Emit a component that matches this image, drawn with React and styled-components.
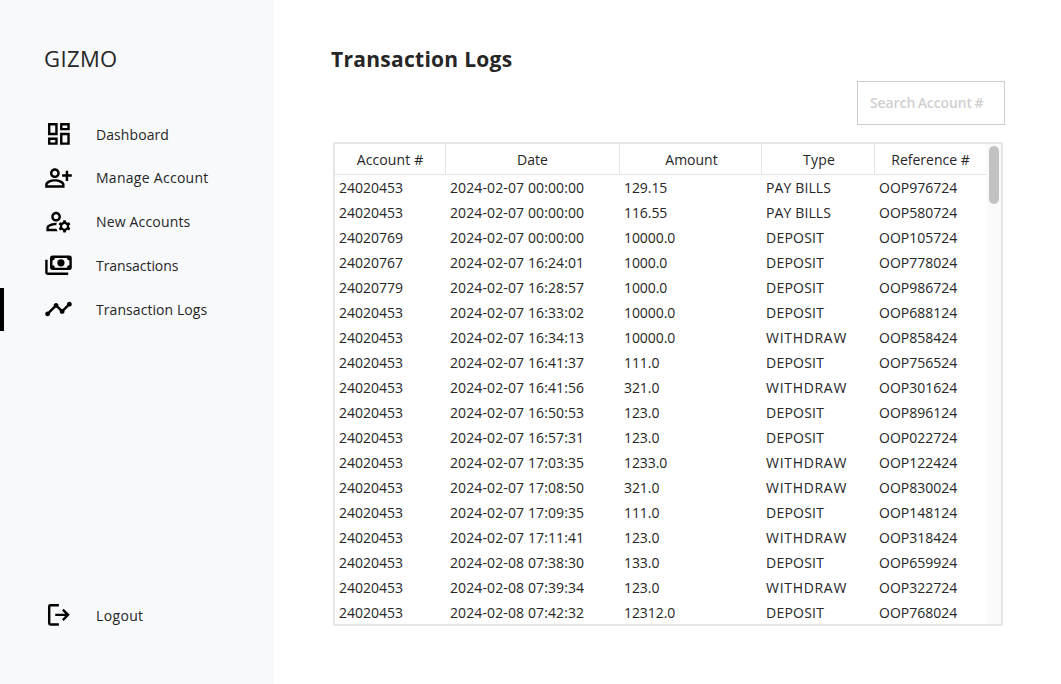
import React from 'react';
import styled, { createGlobalStyle } from 'styled-components';

const Global = createGlobalStyle`
  * { box-sizing: border-box; }
  body { margin: 0; background: #fff; overflow: hidden; }
  input, button { font: inherit; }
`;

const Page = styled.div`
  display: flex;
  width: 1061px;
  height: 684px;
  font-family: "Open Sans", "Noto Sans", sans-serif;
  font-size: 14px;
  color: #262626;
`;

const Sidebar = styled.aside`
  display: flex;
  flex-direction: column;
  width: 274px;
  padding: 42px 0 48px;
  background: #f8f9fb;
`;

const Brand = styled.div`
  height: 32px;
  padding-left: 44px;
  font-size: 22px;
  line-height: 32px;
  letter-spacing: 0.4px;
`;

const Nav = styled.nav`
  display: flex;
  flex-direction: column;
  gap: 1px;
  flex: 1;
  padding-top: 38px;
`;

const NavItem = styled.a`
  display: flex;
  align-items: center;
  gap: 23px;
  height: 43px;
  padding-left: 40px;
  border-left: 4px solid ${(p) => (p.$active ? '#000' : 'transparent')};
  letter-spacing: ${(p) => p.$track || 0}px;
  white-space: nowrap;
`;

const NavLabel = styled.span`
  padding-top: ${(p) => p.$drop || 0}px;
`;

const IconSvg = styled.svg`
  width: 29px;
  height: 29px;
  flex: none;
  fill: #000;
`;

const Main = styled.main`
  display: flex;
  flex-direction: column;
  flex: 1;
  padding: 43px 56px 0 59px;
`;

const Title = styled.h1`
  margin: 0 0 6px -2px;
  height: 32px;
  font-size: 21px;
  line-height: 32px;
  font-weight: 700;
  letter-spacing: 0.27px;
`;

const Search = styled.input`
  align-self: flex-end;
  width: 148px;
  height: 44px;
  padding: 0 12px 2px;
  border: 1px solid #cdcdcd;
  border-radius: 0;
  outline: none;
  background: #fff;
  font-weight: 600;
  letter-spacing: -0.1px;
  word-spacing: -1px;
  &::placeholder { color: #d0d0d0; opacity: 1; }
`;

const TableFrame = styled.section`
  display: flex;
  width: 670px;
  height: 484px;
  margin-top: 17px;
  border: 2px solid #e5e5e5;
  overflow: hidden;
`;

const Grid = styled.div`
  width: 651px;
`;

const Row = styled.div`
  display: grid;
  grid-template-columns: 111px 174px 142px 113px 111px;
  height: ${(p) => (p.$head ? 31 : 25)}px;
  border-bottom: ${(p) => (p.$head ? '1px solid #e5e5e5' : 'none')};
`;

const HeadCell = styled.div`
  padding-left: ${(p) => p.$shift || 0}px;
  border-right: 1px solid #e5e5e5;
  text-align: center;
  line-height: 31px;
  letter-spacing: ${(p) => p.$track || 0}px;
  &:last-child { border-right: 0; }
`;

const Cell = styled.div`
  padding-left: 4px;
  line-height: 25px;
  white-space: nowrap;
  letter-spacing: ${(p) => p.$track || 0}px;
`;

const ScrollTrack = styled.div`
  width: 15px;
  padding: 2px 2px 0 3px;
  background: #fafafa;
`;

const ScrollThumb = styled.div`
  height: 58px;
  border-radius: 5px;
  background: #c2c2c2;
`;

const Icon = ({ children, viewBox = '0 0 24 24' }) => <IconSvg viewBox={viewBox}>{children}</IconSvg>;

const DashboardIcon = () => (
  <Icon viewBox="-0.3 -0.4 24 24">
    <path d="M19 5v2h-4V5h4M9 5v6H5V5h4m10 8v6h-4v-6h4M9 17v2H5v-2h4M21 3h-8v6h8V3zM11 3H3v10h8V3zm10 8h-8v10h8V11zm-10 4H3v6h8v-6z" />
  </Icon>
);

const PersonAddIcon = () => (
  <Icon viewBox="0 -0.4 24 24">
    <path d="M13 8c0-2.21-1.79-4-4-4S5 5.79 5 8s1.79 4 4 4 4-1.79 4-4zm-2 0c0 1.1-.9 2-2 2s-2-.9-2-2 .9-2 2-2 2 .9 2 2zM1 17.200V20h16v-2.800c0-2.600-4.500-4.200-8-4.200s-8 1.600-8 4.200zm2 .8v-.6c.5-1.100 3.300-2.400 6-2.400s5.500 1.300 6 2.400v.6H3zM20 14.500v-3.500h3v-2h-3V6h-2v3h-3v2h3v3.500h2z" />
  </Icon>
);

const ManageIcon = () => (
  <Icon>
    <path d="M4 18v-.65c0-.34.16-.66.41-.81C6.100 15.530 8.030 15 10 15c.03 0 .05 0 .08.010.1-.7.3-1.370.59-1.980-.22-.02-.44-.03-.67-.03-2.420 0-4.680.67-6.610 1.820-.88.52-1.390 1.500-1.390 2.530V20h9.260c-.42-.6-.75-1.280-.97-2H4zM10 12c2.210 0 4-1.790 4-4s-1.790-4-4-4-4 1.790-4 4 1.790 4 4 4zm0-6c1.100 0 2 .9 2 2s-.9 2-2 2-2-.9-2-2 .9-2 2-2zM20.750 16c0-.22-.03-.42-.06-.63l1.140-1.010-1-1.730-1.450.49c-.32-.27-.68-.48-1.080-.63L18 11h-2l-.3 1.490c-.4.15-.76.36-1.080.63l-1.450-.49-1 1.730 1.140 1.010c-.03.21-.06.41-.06.63s.03.42.06.63l-1.140 1.010 1 1.730 1.450-.49c.32.27.68.48 1.080.63L16 21h2l.3-1.490c.4-.15.76-.36 1.080-.63l1.450.49 1-1.730-1.140-1.010c.03-.21.06-.41.06-.63zM17 18c-1.100 0-2-.9-2-2s.9-2 2-2 2 .9 2 2-.9 2-2 2z" />
  </Icon>
);

const CashIcon = () => (
  <Icon viewBox="0 0.2 24 24">
    <path fillRule="evenodd" d="M7 4h14a2 2 0 0 1 2 2v8a2 2 0 0 1-2 2H7a2 2 0 0 1-2-2V6a2 2 0 0 1 2-2zm2 2a2 2 0 0 1-2 2v4a2 2 0 0 1 2 2h10a2 2 0 0 1 2-2V8a2 2 0 0 1-2-2H9zm5 1a3 3 0 1 1 0 6 3 3 0 0 1 0-6zM1 7.500h2V18h17v2H3a2 2 0 0 1-2-2V7.500z" />
  </Icon>
);

const TimelineIcon = () => (
  <Icon viewBox="0 0.4 24 24">
    <path d="M23 8c0 1.100-.9 2-2 2-.18 0-.35-.02-.51-.07l-3.560 3.550c.05.16.07.34.07.52 0 1.100-.9 2-2 2s-2-.9-2-2c0-.18.02-.36.07-.52l-2.550-2.550c-.16.05-.34.07-.52.07s-.36-.02-.52-.07l-4.550 4.560c.05.16.07.33.07.51 0 1.100-.9 2-2 2s-2-.9-2-2 .9-2 2-2c.18 0 .35.02.51.07l4.560-4.550C8.020 9.360 8 9.180 8 9c0-1.100.9-2 2-2s2 .9 2 2c0 .18-.02.36-.07.52l2.550 2.550c.16-.05.34-.07.52-.07s.36.02.52.07l3.550-3.560C19.020 8.350 19 8.180 19 8c0-1.100.9-2 2-2s2 .9 2 2z" />
  </Icon>
);

const LogoutIcon = () => (
  <Icon viewBox="-0.3 -0.3 24 24">
    <path d="M5 21a2 2 0 0 1-2-2V5a2 2 0 0 1 2-2h7v2H5v14h7v2H5zM16 17l-1.380-1.450L17.170 13H9v-2h8.170l-2.550-2.550L16 7l5 5-5 5z" />
  </Icon>
);

const NAV = [
  { label: 'Dashboard', icon: DashboardIcon, track: 0.08, drop: 2 },
  { label: 'Manage Account', icon: PersonAddIcon, track: 0.28 },
  { label: 'New Accounts', icon: ManageIcon, track: 0.17 },
  { label: 'Transactions', icon: CashIcon, track: -0.07 },
  { label: 'Transaction Logs', icon: TimelineIcon, active: true, track: 0.07 },
];

const HEAD = [
  { label: 'Account #', track: 0.12 },
  { label: 'Date' },
  { label: 'Amount', shift: 2 },
  { label: 'Type', shift: 2, track: 0.2 },
  { label: 'Reference #' },
];

const ROWS = [
  ['24020453', '2024-02-07 00:00:00', '129.15', 'PAY BILLS', 'OOP976724'],
  ['24020453', '2024-02-07 00:00:00', '116.55', 'PAY BILLS', 'OOP580724'],
  ['24020769', '2024-02-07 00:00:00', '10000.0', 'DEPOSIT', 'OOP105724'],
  ['24020767', '2024-02-07 16:24:01', '1000.0', 'DEPOSIT', 'OOP778024'],
  ['24020779', '2024-02-07 16:28:57', '1000.0', 'DEPOSIT', 'OOP986724'],
  ['24020453', '2024-02-07 16:33:02', '10000.0', 'DEPOSIT', 'OOP688124'],
  ['24020453', '2024-02-07 16:34:13', '10000.0', 'WITHDRAW', 'OOP858424'],
  ['24020453', '2024-02-07 16:41:37', '111.0', 'DEPOSIT', 'OOP756524'],
  ['24020453', '2024-02-07 16:41:56', '321.0', 'WITHDRAW', 'OOP301624'],
  ['24020453', '2024-02-07 16:50:53', '123.0', 'DEPOSIT', 'OOP896124'],
  ['24020453', '2024-02-07 16:57:31', '123.0', 'DEPOSIT', 'OOP022724'],
  ['24020453', '2024-02-07 17:03:35', '1233.0', 'WITHDRAW', 'OOP122424'],
  ['24020453', '2024-02-07 17:08:50', '321.0', 'WITHDRAW', 'OOP830024'],
  ['24020453', '2024-02-07 17:09:35', '111.0', 'DEPOSIT', 'OOP148124'],
  ['24020453', '2024-02-07 17:11:41', '123.0', 'WITHDRAW', 'OOP318424'],
  ['24020453', '2024-02-08 07:38:30', '133.0', 'DEPOSIT', 'OOP659924'],
  ['24020453', '2024-02-08 07:39:34', '123.0', 'WITHDRAW', 'OOP322724'],
  ['24020453', '2024-02-08 07:42:32', '12312.0', 'DEPOSIT', 'OOP768024'],
];

const COLUMN_TRACK = [0, 0.11, -0.07, 0, 0];
const TYPE_TRACK = { WITHDRAW: 0.7, DEPOSIT: 0.22, 'PAY BILLS': 0.12 };

export default function App() {
  return (
    <Page>
      <Global />
      <Sidebar>
        <Brand>GIZMO</Brand>
        <Nav>
          {NAV.map(({ label, icon: Glyph, active, track, drop }) => (
            <NavItem key={label} $active={active} $track={track}>
              <Glyph />
              <NavLabel $drop={drop}>{label}</NavLabel>
            </NavItem>
          ))}
        </Nav>
        <NavItem $track={0.35}>
          <LogoutIcon />
          <NavLabel $drop={1}>Logout</NavLabel>
        </NavItem>
      </Sidebar>
      <Main>
        <Title>Transaction Logs</Title>
        <Search placeholder="Search Account #" />
        <TableFrame>
          <Grid>
            <Row $head>
              {HEAD.map(({ label, track, shift }) => (
                <HeadCell key={label} $track={track} $shift={shift}>
                  {label}
                </HeadCell>
              ))}
            </Row>
            {ROWS.map((row) => (
              <Row key={row[4]}>
                {row.map((value, i) => (
                  <Cell key={i} $track={TYPE_TRACK[value] ?? COLUMN_TRACK[i]}>
                    {value}
                  </Cell>
                ))}
              </Row>
            ))}
          </Grid>
          <ScrollTrack>
            <ScrollThumb />
          </ScrollTrack>
        </TableFrame>
      </Main>
    </Page>
  );
}
